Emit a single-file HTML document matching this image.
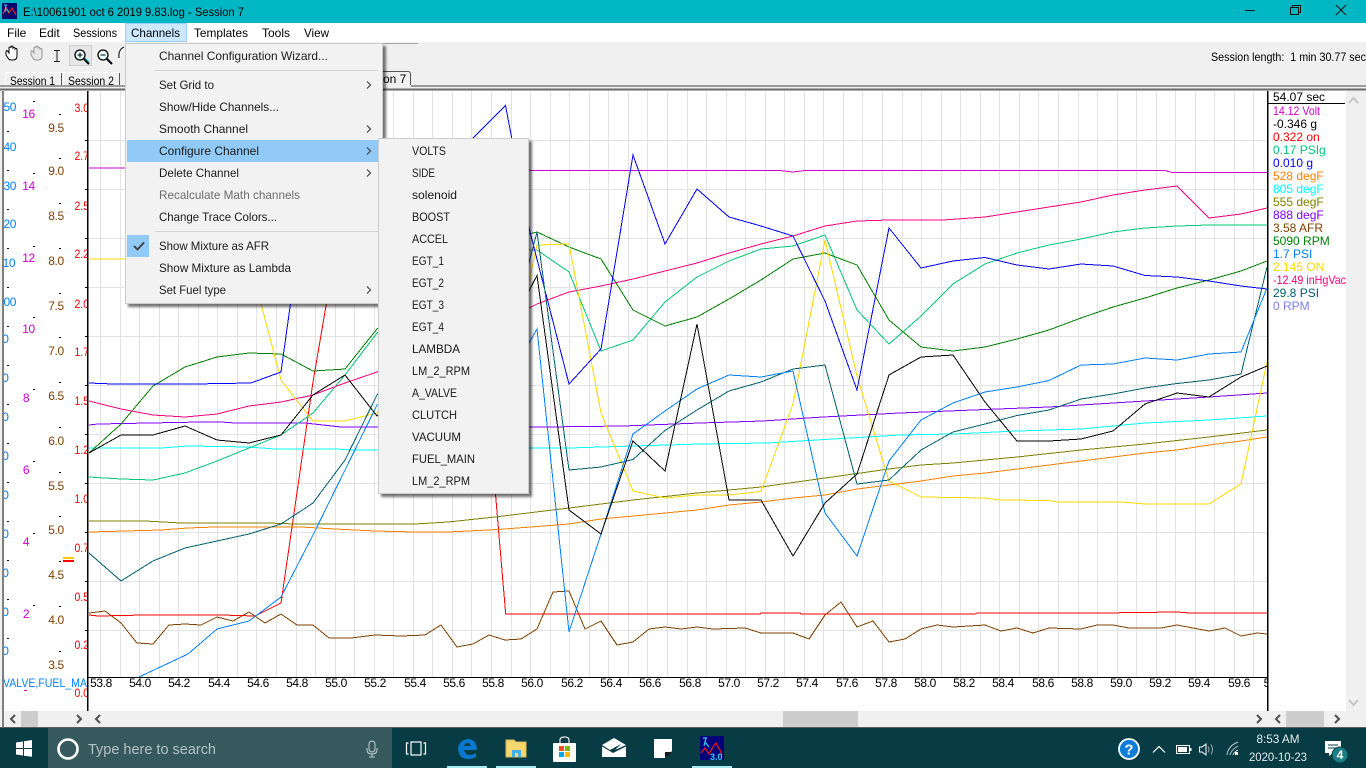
<!DOCTYPE html>
<html><head><meta charset="utf-8"><title>Session 7</title>
<style>
html,body{margin:0;padding:0;background:#fff;overflow:hidden}
svg{display:block;position:absolute;left:0;top:0}
text{font-family:"Liberation Sans",sans-serif;font-size:12px;white-space:pre}
.tr polyline{fill:none;stroke-width:1;shape-rendering:crispEdges}
.m text{fill:#1a1a1a}
.ax text{text-anchor:middle;letter-spacing:-.4px}
.bl text{letter-spacing:-.4px}
.lg text{font-size:12px}
</style></head><body>
<svg width="1366" height="768" viewBox="0 0 1366 768" xmlns="http://www.w3.org/2000/svg">
<defs>
<clipPath id="a1"><rect x="4" y="91" width="83" height="620"/></clipPath>
<clipPath id="plot"><rect x="88" y="91" width="1179" height="586"/></clipPath>
<clipPath id="xl"><rect x="88" y="678" width="1179" height="20"/></clipPath>
<filter id="sh" x="-5%" y="-5%" width="112%" height="112%"><feDropShadow dx="3" dy="3" stdDeviation="1.4" flood-color="#000" flood-opacity=".55"/></filter>
</defs>

<!-- window chrome -->
<rect width="1366" height="768" fill="#fff"/>
<rect width="1366" height="23" fill="#00b7c3"/>
<rect x="2" y="3" width="15" height="16" fill="#0a0a6e"/>
<path d="M3 14L6 7L9 13L12 8L16 15" fill="none" stroke="#e02020" stroke-width="1.2"/>
<path d="M4 5L7 5M6 5L5 12M6 9L9 12" fill="none" stroke="#30d0f0" stroke-width="1"/>
<text x="23" y="16" fill="#000" textLength="221" lengthAdjust="spacingAndGlyphs">E:\10061901 oct 6 2019 9.83.log - Session 7</text>
<path d="M1245 10.5H1255" stroke="#111" stroke-width="1"/>
<path d="M1290.5 7.5H1298.5V14.5H1290.5ZM1292.5 7.5V5.5H1300.5V12.5H1298.5" fill="none" stroke="#111"/>
<path d="M1336 5L1346 15M1346 5L1336 15" stroke="#111" stroke-width="1"/>

<!-- menu bar -->
<rect y="23" width="1366" height="19" fill="#fff"/>
<rect x="125.500" y="23.500" width="61" height="18" fill="#cce8ff" stroke="#99d1ff"/>
<g fill="#000">
<text x="7" y="37">File</text><text x="39" y="37">Edit</text><text x="73" y="37" textLength="44" lengthAdjust="spacingAndGlyphs">Sessions</text>
<text x="131" y="37" textLength="49" lengthAdjust="spacingAndGlyphs">Channels</text><text x="194" y="37" textLength="54" lengthAdjust="spacingAndGlyphs">Templates</text><text x="262" y="37" textLength="28" lengthAdjust="spacingAndGlyphs">Tools</text><text x="304" y="37" textLength="25" lengthAdjust="spacingAndGlyphs">View</text>
</g>

<!-- toolbar + tabs -->
<rect y="42" width="1366" height="49" fill="#f0f0f0"/>
<path d="M383 43.500H418" stroke="#a8a8a8"/>
<text x="1211" y="61" fill="#000" textLength="155" lengthAdjust="spacingAndGlyphs">Session length:  1 min 30.77 sec</text>
<path d="M6 55V52Q6 50 7.500 51L9 53V48Q9 47 10 47T11 48V47Q11 46 12 46T13 47V48Q14 47 15 48V49Q16 48 17 49V56Q17 60 13 60H11Q9 60 8 58Z" fill="#fff" stroke="#000" stroke-width="1"/>
<path d="M31 55V52Q31 50 32.500 51L34 53V48Q34 47 35 47T36 48V47Q36 46 37 46T38 47V48Q39 47 40 48V49Q41 48 42 49V56Q42 60 38 60H36Q34 60 33 58Z" fill="#e8e8e8" stroke="#999" stroke-width="1"/>
<path d="M54 50.500H60M57 50.500V61.500M54 61.500H60" stroke="#222" fill="none"/>
<rect x="69.500" y="45.500" width="22" height="20" fill="#e6e6e6" stroke="#cfcfcf"/>
<circle cx="80" cy="55" r="5" fill="#e8fbff" stroke="#000" stroke-width="1.300"/>
<path d="M77.500 55H82.500M80 52.500V57.500" stroke="#000"/><path d="M84 59L89 64" stroke="#000" stroke-width="2"/><path d="M85 58L89 62" stroke="#00c0d0"/>
<circle cx="103" cy="55" r="5" fill="#e8fbff" stroke="#000" stroke-width="1.300"/>
<path d="M100.500 55H105.500" stroke="#000"/><path d="M107 59L112 64" stroke="#000" stroke-width="2"/>
<path d="M119 58Q118 50 124 47" fill="#fff" stroke="#222" stroke-width="1.200"/>

<path d="M5.500 90V74Q5.500 72.500 7 72.500H61V87" fill="#f0f0f0" stroke="#fff"/>
<path d="M61.500 73V87" stroke="#555"/>
<text x="10" y="85" fill="#000" textLength="45" lengthAdjust="spacingAndGlyphs">Session 1</text>
<path d="M63.500 90V72.500H119.500V87" fill="#f0f0f0" stroke="#fff"/>
<path d="M119.500 73V87" stroke="#555"/>
<text x="68" y="85" fill="#000" textLength="46" lengthAdjust="spacingAndGlyphs">Session 2</text>
<path d="M383 71.500H408Q410.500 71.500 410.500 74V86" fill="#f0f0f0" stroke="#555"/>
<text x="383" y="83" fill="#000">on 7</text>
<rect y="85" width="1366" height="2" fill="#9a9a9a"/>
<rect y="87" width="1366" height="1.500" fill="#f0f0f0"/>
<rect y="88.500" width="1366" height="2" fill="#6c6c6c"/>
<rect x="345" y="85" width="66" height="3.500" fill="#f0f0f0"/>

<rect x="0" y="91" width="1366" height="620" fill="#fff"/>
<rect x="0" y="91" width="2" height="637" fill="#f0f0f0"/>
<rect x="2" y="91" width="2" height="637" fill="#808080"/>

<!-- grid -->
<g shape-rendering="crispEdges" stroke="#e3e3e3" stroke-width="1" fill="none">
<path transform="translate(.5,0)" d="M100 91V677M120 91V677M139 91V677M159 91V677M178 91V677M198 91V677M217 91V677M237 91V677M256 91V677M276 91V677M296 91V677M315 91V677M335 91V677M354 91V677M374 91V677M393 91V677M413 91V677M432 91V677M452 91V677M471 91V677M491 91V677M511 91V677M530 91V677M550 91V677M569 91V677M589 91V677M608 91V677M628 91V677M647 91V677M667 91V677M687 91V677M706 91V677M726 91V677M745 91V677M765 91V677M784 91V677M804 91V677M823 91V677M843 91V677M862 91V677M882 91V677M902 91V677M921 91V677M941 91V677M960 91V677M980 91V677M999 91V677M1019 91V677M1038 91V677M1058 91V677M1078 91V677M1097 91V677M1117 91V677M1136 91V677M1156 91V677M1175 91V677M1195 91V677M1214 91V677M1234 91V677M1253 91V677"/>
<path transform="translate(0,.5)" d="M88 140H1267M88 189H1267M88 238H1267M88 287H1267M88 336H1267M88 385H1267M88 434H1267M88 483H1267M88 532H1267M88 581H1267M88 630H1267"/>
</g>

<!-- traces -->
<g class="tr" clip-path="url(#plot)">
<polyline stroke="#804000" points="89,613 105,611 121,623 137,643 153,644 169,625 185,624 201,625 217,617 233,621 249,612 265,623 281,614 297,625 313,625 329,638 351,638 375,635 401,636 425,635 441,625 457,647 473,644 489,635 505,640 521,639 537,629 553,592 569,591 585,629 601,621 617,645 633,642 649,629 665,627 681,629 697,627 713,629 745,628 761,633 793,633 809,639 825,615 841,602 857,627 873,621 889,642 905,639 921,629 937,625 953,627 985,625 1001,631 1017,628 1033,633 1049,628 1081,629 1097,625 1113,625 1129,628 1161,628 1177,625 1209,631 1225,628 1241,636 1257,633 1267,634"/>
<polyline stroke="#ff0000" points="89,615 98,616 145,615 221,615 255,616 281,603 313,382 327,300 345,250 409,230 473,230 505.700,614 760,614 761,613 800,613 801,614 975,614 977,613 1040,613 1100,613 1177,612 1190,613 1267,613"/>
<polyline stroke="#ff8000" points="89,532 161,530 188,528 215,527 301,527 335,529 375,531 415,532 448,532 498,529.500 569,524 601,519 633,516 665,513 697,510 729,505 761,502 793,498 825,495 857,489 889,485 921,481 953,476 985,473 1017,469 1049,465 1081,461 1113,457 1145,453 1177,450 1209,445 1241,441 1267,437"/>
<polyline stroke="#808000" points="89,521 145,521 181,523 268,523 295,524 415,524 448,522 495,517 569,508 633,500 697,493 761,487 825,478 889,469 921,465 953,463 1017,457 1081,450 1145,444 1209,437 1267,430"/>
<polyline stroke="#00ffff" points="89,448 161,448 188,446 248,447 275,449 335,449 355,450 377,450 529,448 569,448 633,446 700,444 767,443 833,439 900,435 953,434 1017,431 1081,429 1145,423 1209,420 1267,416"/>
<polyline stroke="#8000ff" points="89,425 98,424 201,422 221,422 235,423 305,423 341,427 377,427 545,427 623,426 700,423 763,421 823,417 900,413 985,409.500 1049,407 1113,403 1177,399 1209,397 1267,393"/>
<polyline stroke="#00c878" points="89,477 121,479 153,480 185,473 217,461 249,448 281,435 313,413 345,375 377,333 440,280 529,250 537,250 569,272 601,351 633,340 665,302 697,277 729,261 761,249 793,246 825,235 857,310 889,344 921,316 953,284 985,264 1017,253 1049,245 1081,239 1113,232 1145,228 1177,226 1209,225 1267,225"/>
<polyline stroke="#008000" points="89,453 121,424 153,386 185,367 217,357 249,353 281,354 313,371 345,369 377,329 440,280 529,234 537,232 569,247 601,259 633,310 665,326 697,317 729,299 761,280 793,259 825,253 857,265 889,320 921,347 953,351 985,347 1017,339 1049,330 1081,318 1113,307 1145,298 1177,288 1209,280 1241,271 1267,261"/>
<polyline stroke="#d000d0" points="89,168 505,169 535,170.500 780,170.500 793,172 805,170.500 1165,170.500 1172,172.400 1267,172.400"/>
<polyline stroke="#ff0080" points="89,401 121,409 153,415 185,417 217,414 249,406 281,402 313,395 345,383 377,372 529,308 537,304 569,292 601,286 633,279 665,271 697,263 729,253 761,244 793,236 825,226 857,221 889,220 943,220 985,217 1017,212 1049,207 1081,202 1113,195 1145,190 1177,186 1209,218 1241,214 1267,208"/>
<polyline stroke="#ffd800" points="89,259 124,259 240,259 260,300 281,380 313,421 345,421 377,413 529,282 537,245 569,244 601,413 633,491 665,498 697,495 729,495 761,491.500 793,404 825,240 857,376 889,481 921,497 985,498 1001,500 1049,500.500 1057,502 1121,502 1145,504 1209,504 1241,484 1267,362"/>
<polyline stroke="#0000ff" points="89,383 113,384 193,384 251,383 281,372 291,300 313,210 345,190 441,170 474,137 505.500,105.500 529,228 569,384 601,349 633,155 665,244 697,189 729,217 761,226 793,236 825,301 857,390 889,228 921,268 953,261 985,257.500 1017,265 1049,269 1081,264 1113,266 1145,275.500 1177,277 1209,281 1241,286 1267,289"/>
<polyline stroke="#006070" points="89,553 121,581 153,561 185,548 217,541 249,534 281,524 313,503 345,460 377,395 529,263 537,232 569,470 601,467 633,459.500 665,430.500 697,410 729,391 761,382 793,369 825,365 857,484 889,480 921,450 953,432 985,424 1017,415.500 1049,410 1081,399 1113,394 1145,388 1177,383.500 1209,380 1241,374 1267,267"/>
<polyline stroke="#0080ff" points="139,677 188,654 217,629 249,621 281,597 313,535 345,470 377,405 529,343 537,329 569,632 601,534 633,434 665,411 697,389 729,375 761,377 793,371 825,513 857,556 889,461 921,420 953,403 985,392 1017,387 1049,380.500 1081,365 1113,364 1145,358 1177,360 1209,354 1241,352 1267,288"/>
<polyline stroke="#000" points="89,453 121,435 153,435 185,426 217,440 249,443 281,435 313,395 345,375 377,416 529,291 537,275.500 569,510 601,534 633,441 665,471 697,324 729,500 761,500 793,556 825,503 857,474 889,375 921,357 953,355 985,402 1017,441 1049,441 1081,439 1113,431 1145,404 1177,393 1209,397 1241,377 1267,366"/>
</g>

<!-- axes -->
<g shape-rendering="crispEdges">
<rect x="87" y="91" width="1.500" height="620" fill="#000"/>
<rect x="1267" y="91" width="1.500" height="620" fill="#000"/>
<rect x="88" y="677" width="1179" height="1" fill="#000"/>
<rect x="1268" y="103" width="77" height="1" fill="#000"/>
</g>

<g clip-path="url(#a1)">
<g fill="#0080ff" class="bl">
<text x="-2.800" y="111">150</text><text x="-2.800" y="151">140</text><text x="-2.800" y="190">130</text><text x="-2.800" y="228">120</text><text x="-2.800" y="267">110</text><text x="-2.800" y="306">100</text><text x="-4" y="343">90</text><text x="-4" y="382">80</text><text x="-4" y="421">70</text><text x="-4" y="460">60</text><text x="-4" y="499">50</text><text x="-4" y="538">40</text><text x="-4" y="577">30</text><text x="-4" y="616">20</text><text x="-4" y="655">10</text>
</g>
<text x="3" y="687" fill="#0080ff" textLength="84" lengthAdjust="spacingAndGlyphs">VALVE,FUEL_MA</text>
<g class="ax" fill="#d000d0"><text x="28.500" y="118">16</text><text x="28.500" y="190">14</text><text x="28.500" y="262">12</text><text x="28.500" y="333">10</text><text x="26" y="402">8</text><text x="26" y="474">6</text><text x="26" y="546">4</text><text x="26" y="618">2</text></g>
<g class="ax" fill="#804000"><text x="56" y="132">9.5</text><text x="56" y="175">9.0</text><text x="56" y="220">8.5</text><text x="56" y="265">8.0</text><text x="56" y="310">7.5</text><text x="56" y="355">7.0</text><text x="56" y="400">6.5</text><text x="56" y="445">6.0</text><text x="56" y="490">5.5</text><text x="56" y="534">5.0</text><text x="56" y="579">4.5</text><text x="56" y="624">4.0</text><text x="56" y="669">3.5</text></g>
<g fill="#ff0000"><text x="74.500" y="112" textLength="14.500" lengthAdjust="spacingAndGlyphs">3.0</text><text x="74.500" y="160" textLength="14.500" lengthAdjust="spacingAndGlyphs">2.7</text><text x="74.500" y="210" textLength="14.500" lengthAdjust="spacingAndGlyphs">2.5</text><text x="74.500" y="258" textLength="14.500" lengthAdjust="spacingAndGlyphs">2.2</text><text x="74.500" y="308" textLength="14.500" lengthAdjust="spacingAndGlyphs">2.0</text><text x="74.500" y="356" textLength="14.500" lengthAdjust="spacingAndGlyphs">1.7</text><text x="74.500" y="405" textLength="14.500" lengthAdjust="spacingAndGlyphs">1.5</text><text x="74.500" y="454" textLength="14.500" lengthAdjust="spacingAndGlyphs">1.2</text><text x="74.500" y="503" textLength="14.500" lengthAdjust="spacingAndGlyphs">1.0</text><text x="74.500" y="552" textLength="14.500" lengthAdjust="spacingAndGlyphs">0.7</text><text x="74.500" y="601" textLength="14.500" lengthAdjust="spacingAndGlyphs">0.5</text><text x="74.500" y="649" textLength="14.500" lengthAdjust="spacingAndGlyphs">0.2</text><text x="74.500" y="697" textLength="14.500" lengthAdjust="spacingAndGlyphs">0.0</text></g>
</g>
<g fill="#000" shape-rendering="crispEdges">
<path d="M7 131h2v1h-2zM7 170h2v1h-2zM7 209h2v1h-2zM7 248h2v1h-2zM7 287h2v1h-2zM7 326h2v1h-2zM7 365h2v1h-2zM7 404h2v1h-2zM7 443h2v1h-2zM7 482h2v1h-2zM7 521h2v1h-2zM7 560h2v1h-2zM7 599h2v1h-2zM7 638h2v1h-2z"/>
<path d="M33 101h2v1h-2zM33 173h2v1h-2zM33 246h2v1h-2zM33 317h2v1h-2zM33 389h2v1h-2zM33 461h2v1h-2zM33 533h2v1h-2zM33 605h2v1h-2z"/>
<path d="M59 114h2v1h-2zM59 158h2v1h-2zM59 203h2v1h-2zM59 248h2v1h-2zM59 293h2v1h-2zM59 337h2v1h-2zM59 382h2v1h-2zM59 427h2v1h-2zM59 472h2v1h-2zM59 516h2v1h-2zM59 561h2v1h-2zM59 606h2v1h-2zM59 651h2v1h-2z"/>
<path d="M85 140h2v1h-2zM85 189h2v1h-2zM85 238h2v1h-2zM85 287h2v1h-2zM85 336h2v1h-2zM85 385h2v1h-2zM85 434h2v1h-2zM85 483h2v1h-2zM85 532h2v1h-2zM85 581h2v1h-2zM85 630h2v1h-2z"/>
</g>
<rect x="63" y="557" width="11" height="2" fill="#ffc800"/><rect x="63" y="560" width="11" height="2" fill="#ff0000"/>
<rect x="24" y="690" width="3" height="1" fill="#d000d0"/>

<g class="ax" fill="#000" clip-path="url(#xl)">
<text x="101" y="687">53.8</text><text x="140" y="687">54.0</text><text x="179" y="687">54.2</text><text x="219" y="687">54.4</text><text x="258" y="687">54.6</text><text x="297" y="687">54.8</text><text x="336" y="687">55.0</text><text x="375" y="687">55.2</text><text x="415" y="687">55.4</text><text x="454" y="687">55.6</text><text x="493" y="687">55.8</text><text x="532" y="687">56.0</text><text x="572" y="687">56.2</text><text x="611" y="687">56.4</text><text x="650" y="687">56.6</text><text x="690" y="687">56.8</text><text x="729" y="687">57.0</text><text x="768" y="687">57.2</text><text x="807" y="687">57.4</text><text x="847" y="687">57.6</text><text x="886" y="687">57.8</text><text x="925" y="687">58.0</text><text x="964" y="687">58.2</text><text x="1003" y="687">58.4</text><text x="1043" y="687">58.6</text><text x="1082" y="687">58.8</text><text x="1121" y="687">59.0</text><text x="1160" y="687">59.2</text><text x="1199" y="687">59.4</text><text x="1239" y="687">59.6</text><text x="1274.500" y="687">59.8</text>
</g>

<!-- legend -->
<g class="lg">
<text x="1273" y="101" fill="#000">54.07 sec</text>
<text x="1273" y="115" fill="#d000d0" textLength="47" lengthAdjust="spacingAndGlyphs">14.12 Volt</text>
<text x="1273" y="128" fill="#000">-0.346 g</text>
<text x="1273" y="141" fill="#ff0000">0.322 on</text>
<text x="1273" y="154" fill="#00c878">0.17 PSIg</text>
<text x="1273" y="167" fill="#0000ff">0.010 g</text>
<text x="1273" y="180" fill="#ff8000">528 degF</text>
<text x="1273" y="193" fill="#00ffff">805 degF</text>
<text x="1273" y="206" fill="#808000">555 degF</text>
<text x="1273" y="219" fill="#8000ff">888 degF</text>
<text x="1273" y="232" fill="#804000">3.58 AFR</text>
<text x="1273" y="245" fill="#008000">5090 RPM</text>
<text x="1273" y="258" fill="#0080ff">1.7 PSI</text>
<text x="1273" y="271" fill="#ffd800">2.145 ON</text>
<text x="1273" y="284" fill="#ff0080" textLength="73" lengthAdjust="spacingAndGlyphs">-12.49 inHgVac</text>
<text x="1273" y="297" fill="#006070">29.8 PSI</text>
<text x="1273" y="310" fill="#8080f0">0 RPM</text>
</g>

<!-- scrollbars -->
<rect x="1346" y="91" width="20" height="620" fill="#f0f0f0"/>
<path d="M1349 103L1353.500 98L1358 103" fill="none" stroke="#c4c4c4" stroke-width="2"/>
<path d="M1349 700L1353.500 705L1358 700" fill="none" stroke="#c4c4c4" stroke-width="2"/>
<rect x="4" y="711" width="1362" height="16" fill="#f0f0f0"/>
<rect x="0" y="727" width="1366" height="1" fill="#5c5c5c"/>
<rect x="21" y="711" width="17" height="16" fill="#cdcdcd"/>
<rect x="783" y="711" width="75" height="16" fill="#cdcdcd"/>
<rect x="1286" y="711" width="38" height="16" fill="#cdcdcd"/>
<g fill="none" stroke="#505050" stroke-width="2">
<path d="M15 715L11 719L15 723"/><path d="M77 715L81 719L77 723"/><path d="M100 715L96 719L100 723"/><path d="M1257 715L1261 719L1257 723"/><path d="M1280 715L1276 719L1280 723"/><path d="M1335 715L1339 719L1335 723"/>
</g>

<!-- menu -->
<rect x="125.500" y="43.500" width="257" height="260" fill="#f2f2f2" stroke="#cccccc" filter="url(#sh)"/>
<path d="M155 70.500H378M155 231.500H378" stroke="#d4d4d4"/>
<rect x="127" y="140" width="251" height="22" fill="#91c9f7"/>
<rect x="127" y="235" width="22" height="22" fill="#91c9f7"/>
<path d="M134 246L137.500 249.500L144 242.500" fill="none" stroke="#3a3a3a" stroke-width="1.800"/>
<g class="m">
<text x="159" y="60" textLength="169" lengthAdjust="spacingAndGlyphs">Channel Configuration Wizard...</text>
<text x="159" y="89" textLength="55" lengthAdjust="spacingAndGlyphs">Set Grid to</text>
<text x="159" y="111" textLength="120" lengthAdjust="spacingAndGlyphs">Show/Hide Channels...</text>
<text x="159" y="133" textLength="89" lengthAdjust="spacingAndGlyphs">Smooth Channel</text>
<text x="159" y="155" textLength="100" lengthAdjust="spacingAndGlyphs">Configure Channel</text>
<text x="159" y="177" textLength="80" lengthAdjust="spacingAndGlyphs">Delete Channel</text>
<text x="159" y="199" textLength="141" lengthAdjust="spacingAndGlyphs" style="fill:#6d6d6d">Recalculate Math channels</text>
<text x="159" y="221" textLength="118" lengthAdjust="spacingAndGlyphs">Change Trace Colors...</text>
<text x="159" y="250" textLength="110" lengthAdjust="spacingAndGlyphs">Show Mixture as AFR</text>
<text x="159" y="272" textLength="132" lengthAdjust="spacingAndGlyphs">Show Mixture as Lambda</text>
<text x="159" y="294" textLength="67" lengthAdjust="spacingAndGlyphs">Set Fuel type</text>
</g>
<g fill="none" stroke="#444" stroke-width="1.200">
<path d="M367 81.500L370.500 85L367 88.500"/><path d="M367 125.500L370.500 129L367 132.500"/><path d="M367 147.500L370.500 151L367 154.500"/><path d="M367 169.500L370.500 173L367 176.500"/><path d="M367 286.500L370.500 290L367 293.500"/>
</g>

<!-- submenu -->
<rect x="378.500" y="138.500" width="150" height="355" fill="#f2f2f2" stroke="#cccccc" filter="url(#sh)"/>
<g class="m">
<text x="412" y="155" textLength="34" lengthAdjust="spacingAndGlyphs">VOLTS</text><text x="412" y="177" textLength="23" lengthAdjust="spacingAndGlyphs">SIDE</text><text x="412" y="199" textLength="45" lengthAdjust="spacingAndGlyphs">solenoid</text><text x="412" y="221" textLength="38" lengthAdjust="spacingAndGlyphs">BOOST</text><text x="412" y="243" textLength="36" lengthAdjust="spacingAndGlyphs">ACCEL</text><text x="412" y="265" textLength="32" lengthAdjust="spacingAndGlyphs">EGT_1</text><text x="412" y="287" textLength="32" lengthAdjust="spacingAndGlyphs">EGT_2</text><text x="412" y="309" textLength="32" lengthAdjust="spacingAndGlyphs">EGT_3</text><text x="412" y="331" textLength="32" lengthAdjust="spacingAndGlyphs">EGT_4</text><text x="412" y="353" textLength="48" lengthAdjust="spacingAndGlyphs">LAMBDA</text><text x="412" y="375" textLength="58" lengthAdjust="spacingAndGlyphs">LM_2_RPM</text><text x="412" y="397" textLength="45" lengthAdjust="spacingAndGlyphs">A_VALVE</text><text x="412" y="419" textLength="45" lengthAdjust="spacingAndGlyphs">CLUTCH</text><text x="412" y="441" textLength="49" lengthAdjust="spacingAndGlyphs">VACUUM</text><text x="412" y="463" textLength="63" lengthAdjust="spacingAndGlyphs">FUEL_MAIN</text><text x="412" y="485" textLength="58" lengthAdjust="spacingAndGlyphs">LM_2_RPM</text>
</g>

<!-- taskbar -->
<rect y="728" width="1366" height="40" fill="#073c44"/>
<rect x="48" y="728" width="344" height="40" fill="#35595c"/>
<path d="M16 742.500L23 741.500V748H16ZM24 741.300L32 740V748H24ZM16 749H23V755.500L16 754.500ZM24 749H32V756.800L24 755.700Z" fill="#fff"/>
<circle cx="68" cy="749" r="9.500" fill="none" stroke="#fff" stroke-width="2.600"/>
<text x="88" y="754" fill="#b4c3c4" style="font-size:14.500px" textLength="128" lengthAdjust="spacingAndGlyphs">Type here to search</text>
<rect x="369" y="741" width="6" height="11" rx="3" fill="none" stroke="#c4d0d1"/>
<path d="M367 748V750Q367 754 372 754T377 750V748M372 754V757M369 757H375" fill="none" stroke="#c4d0d1"/>
<g fill="none" stroke="#fff" stroke-width="1.200"><rect x="411" y="742" width="10" height="13"/><path d="M408.500 743H406.500V754H408.500M423.500 743H425.500V754H423.500"/></g>
<path d="M458 749Q459 740 468 739Q476 739 477 750H464Q465 755 470 755Q473 755 476 753V757Q472 759 468 759Q459 759 458 749ZM464 746H471Q470 743 467.500 743Q465 743 464 746Z" fill="#0a78d0"/>
<path d="M506 740H514L516 742H526V757H506Z" fill="#f6d66e" stroke="#d8b95a"/>
<rect x="512" y="750" width="9" height="7" fill="#3fb0e8"/><rect x="515" y="753" width="3" height="4" fill="#f6d66e"/>
<rect x="553" y="743" width="23" height="19" rx="1" fill="#fff"/>
<path d="M560 743V740Q560 737 564.500 737T569 740V743" fill="none" stroke="#e8e8e8" stroke-width="1.200"/>
<rect x="559" y="746" width="5" height="5" fill="#f25022"/><rect x="565" y="746" width="5" height="5" fill="#7fba00"/><rect x="559" y="752" width="5" height="5" fill="#00a4ef"/><rect x="565" y="752" width="5" height="5" fill="#ffb900"/>
<path d="M602 745L614 738L626 745L615 750L621 744L610 750ZM602 746.500L613 753L626 746.500V757H602Z" fill="#fff"/>
<path d="M654 739H672V751L665 758H654Z" fill="#fff"/><path d="M672 752L665 752V758Z" fill="#1a1a1a"/>
<rect x="700" y="736" width="24" height="24" fill="#00007a"/>
<path d="M701 753L705 748L709 754L713 747L716 743L720 750L722 755" fill="none" stroke="#e01818" stroke-width="1.300"/>
<path d="M703 738H707M706 738L704 746M705 742L709 747" fill="none" stroke="#30d0f0" stroke-width="1.200"/>
<text x="710" y="760" fill="#30d0f0" style="font-size:9px;font-weight:bold">3.0</text>
<rect x="447" y="766" width="40" height="2" fill="#a4ecf0"/><rect x="496" y="766" width="40" height="2" fill="#a4ecf0"/><rect x="692" y="766" width="40" height="2" fill="#a4ecf0"/>

<circle cx="1129" cy="749" r="10" fill="#0b7cd8" stroke="#fff" stroke-width="1.800"/>
<text x="1129" y="754.500" fill="#fff" text-anchor="middle" style="font-size:15px;font-weight:bold">?</text>
<path d="M1153 752.500L1159 746.500L1165 752.500" fill="none" stroke="#fff" stroke-width="1.200"/>
<rect x="1176.500" y="745.500" width="13" height="8" fill="none" stroke="#fff"/><rect x="1178" y="747" width="9" height="5" fill="#fff"/><rect x="1190" y="748" width="1.500" height="3" fill="#fff"/>
<path d="M1199.500 747H1202L1206 744V755L1202 752H1199.500Z" fill="none" stroke="#fff"/><path d="M1208 746.500Q1210 749.500 1208 752.500M1211 744.500Q1214 749.500 1211 754.500" fill="none" stroke="#9aacae"/>
<path d="M1227 755Q1228 746 1238 742M1230 755Q1231 750 1238 746M1233 755Q1234 752 1238 750" fill="none" stroke="#b8c6c7"/><rect x="1235" y="752" width="3" height="3" fill="#fff"/>
<text x="1278" y="743" fill="#e4ecec" text-anchor="middle" textLength="43" lengthAdjust="spacingAndGlyphs">8:53 AM</text>
<text x="1278" y="761" fill="#e4ecec" text-anchor="middle" textLength="58" lengthAdjust="spacingAndGlyphs">2020-10-23</text>
<path d="M1325 741H1341V753H1333L1329 756V753H1325Z" fill="#fff"/><path d="M1328 745H1338M1328 748H1338" stroke="#073c44"/>
<circle cx="1340" cy="755" r="8" fill="#1a7f86" stroke="#073c44" stroke-width="1"/>
<text x="1340" y="759" fill="#fff" text-anchor="middle" style="font-weight:bold">4</text>
</svg>
</body></html>
